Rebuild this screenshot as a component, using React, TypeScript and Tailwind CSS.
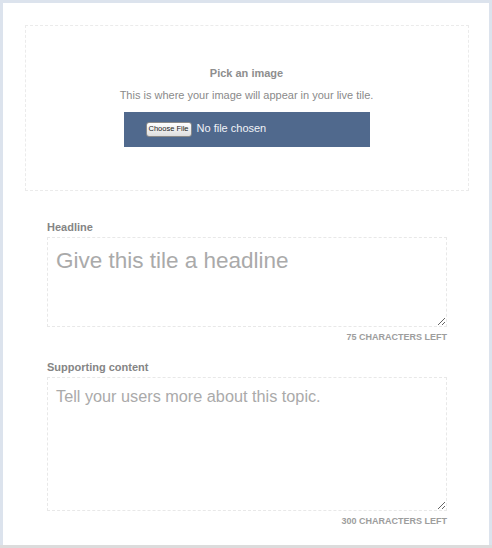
export default function App() {
  return (
    <div
      className="w-[492px] h-[548px] overflow-hidden bg-[#dce3ed] pt-[3px] px-[3px]"
      style={{ fontFamily: '"Liberation Sans", Arial, sans-serif' }}
    >
      <div className="h-[542px] bg-white pt-[22px] pl-[22px] pr-[20px]">
        {/* image picker */}
        <div className="h-[166px] border border-dashed border-[#ebebeb] flex flex-col items-center justify-center pb-[4px] pr-[1px]">
          <div className="text-[11px] leading-[14px] font-bold text-[#8e8e8e]">
            Pick an image
          </div>
          <div className="mt-[8px] text-[11px] leading-[14px] text-[#8a8a8a]">
            This is where your image will appear in your live tile.
          </div>
          <div className="mt-[10px] w-[246px] h-[35px] bg-[#50698d] flex items-center pl-[22px]">
            <button className="h-[15px] px-[2px] rounded-[3px] border border-[#8a8a8a] bg-gradient-to-b from-white to-[#dedede] text-[7.5px] leading-[12px] text-[#222]">
              Choose File
            </button>
            <span className="ml-[5px] -mt-[2px] text-[11px] text-[#f0f3f8]">No file chosen</span>
          </div>
        </div>

        <div className="pl-[22px] pr-[22px]">
          <label className="block mt-[29px] text-[11px] leading-[14px] font-bold text-[#858585]">
            Headline
          </label>
          <textarea
            placeholder="Give this tile a headline"
            className="block mt-[3px] w-full h-[90px] border border-dashed border-[#e8e8e8] px-[8px] pt-[10px] text-[22.5px] leading-[26px] text-[#555] placeholder:text-[#aaaaaa] outline-none"
          />
          <div className="mt-[5px] text-right text-[9px] leading-[10px] font-bold text-[#9d9d9d]">
            75 CHARACTERS LEFT
          </div>

          <label className="block mt-[18px] text-[11px] leading-[14px] font-bold text-[#858585]">
            Supporting content
          </label>
          <textarea
            placeholder="Tell your users more about this topic."
            className="block mt-[3px] w-full h-[134px] border border-dashed border-[#e8e8e8] px-[8px] pt-[8px] text-[16.25px] leading-[20px] text-[#555] placeholder:text-[#aaaaaa] outline-none"
          />
          <div className="mt-[5px] text-right text-[9px] leading-[10px] font-bold text-[#9d9d9d]">
            300 CHARACTERS LEFT
          </div>
        </div>
      </div>
      <div className="h-[3px] -mx-[3px] bg-[#dcdcdc]" />
    </div>
  );
}
